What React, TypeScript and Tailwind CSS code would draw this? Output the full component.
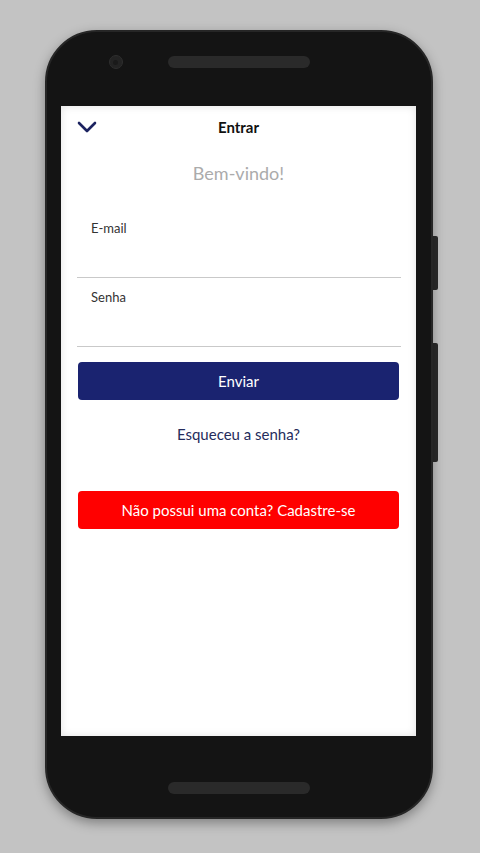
import React from "react";

const Field = ({ label, className }: { label: string; className: string }) => (
  <div className={"border-b border-[#c9c9c9] pl-[14px] " + className}>
    <div className="text-[13px] leading-[18px] text-[#333333]">{label}</div>
  </div>
);

const App = () => {
  return (
    <div
      className="w-[480px] h-[853px] bg-[#c3c3c3] flex justify-center pt-[30px]"
      style={{ fontFamily: "Lato, 'Noto Sans', sans-serif" }}
    >
      <div className="relative w-[388px] h-[789px] ml-[-3px]">
        {/* side buttons */}
        <div className="absolute right-[-5px] top-[206px] w-[6px] h-[54px] bg-[#2a2a2a] rounded-r-[2px]" />
        <div className="absolute right-[-5px] top-[313px] w-[6px] h-[119px] bg-[#2a2a2a] rounded-r-[2px]" />

        <div className="relative w-full h-full rounded-[52px] bg-[#141414] border-[2px] border-[#262626] shadow-[0_4px_12px_rgba(0,0,0,0.35)] flex flex-col items-center">
          {/* top bezel */}
          <div className="h-[74px] w-full flex items-center relative">
            <div className="ml-[62px] mt-[-14px] w-[14px] h-[14px] rounded-full bg-[#232323] border border-[#2e2e2e] flex items-center justify-center">
              <div className="w-[5px] h-[5px] rounded-full bg-[#1a1a1a]" />
            </div>
            <div className="ml-[45px] mt-[-14px] w-[142px] h-[12px] rounded-full bg-[#2a2a2a]" />
          </div>

          {/* screen */}
          <div className="w-[355px] h-[630px] bg-white shadow-[inset_0_0_8px_rgba(0,0,0,0.12)] flex flex-col">
            <div className="h-[42px] flex items-center relative">
              <svg
                className="absolute left-[16px] top-[15px]"
                width="20"
                height="12"
                viewBox="0 0 20 12"
                fill="none"
              >
                <path d="M2 2l8 8 8-8" stroke="#1c2360" strokeWidth="2.6" strokeLinecap="round" strokeLinejoin="round" />
              </svg>
              <div className="w-full text-center text-[15px] font-bold text-[#111111]">Entrar</div>
            </div>

            <div className="mt-[13px] text-center text-[18px] leading-[24px] text-[#ababab]">Bem-vindo!</div>

            <div className="mt-[21px] ml-[16px] mr-[15px]">
              <Field label="E-mail" className="h-[72px] pt-[13px]" />
              <Field label="Senha" className="h-[69px] pt-[10px]" />
            </div>

            <div className="mx-[17px] mt-[15px] flex flex-col">
              <button className="h-[38px] rounded-[4px] bg-[#1a2370] text-white text-[15px]">Enviar</button>
              <div className="mt-[24px] text-center text-[15px] leading-[20px] text-[#252c5c]">Esqueceu a senha?</div>
              <button className="mt-[47px] h-[38px] rounded-[4px] bg-[#ff0000] text-white text-[15px]">
                Não possui uma conta? Cadastre-se
              </button>
            </div>
          </div>

          {/* bottom bezel */}
          <div className="flex-1 w-full flex items-center justify-center">
            <div className="w-[142px] h-[12px] rounded-full bg-[#2a2a2a] mt-[22px]" />
          </div>
        </div>
      </div>
    </div>
  );
};

export default App;
